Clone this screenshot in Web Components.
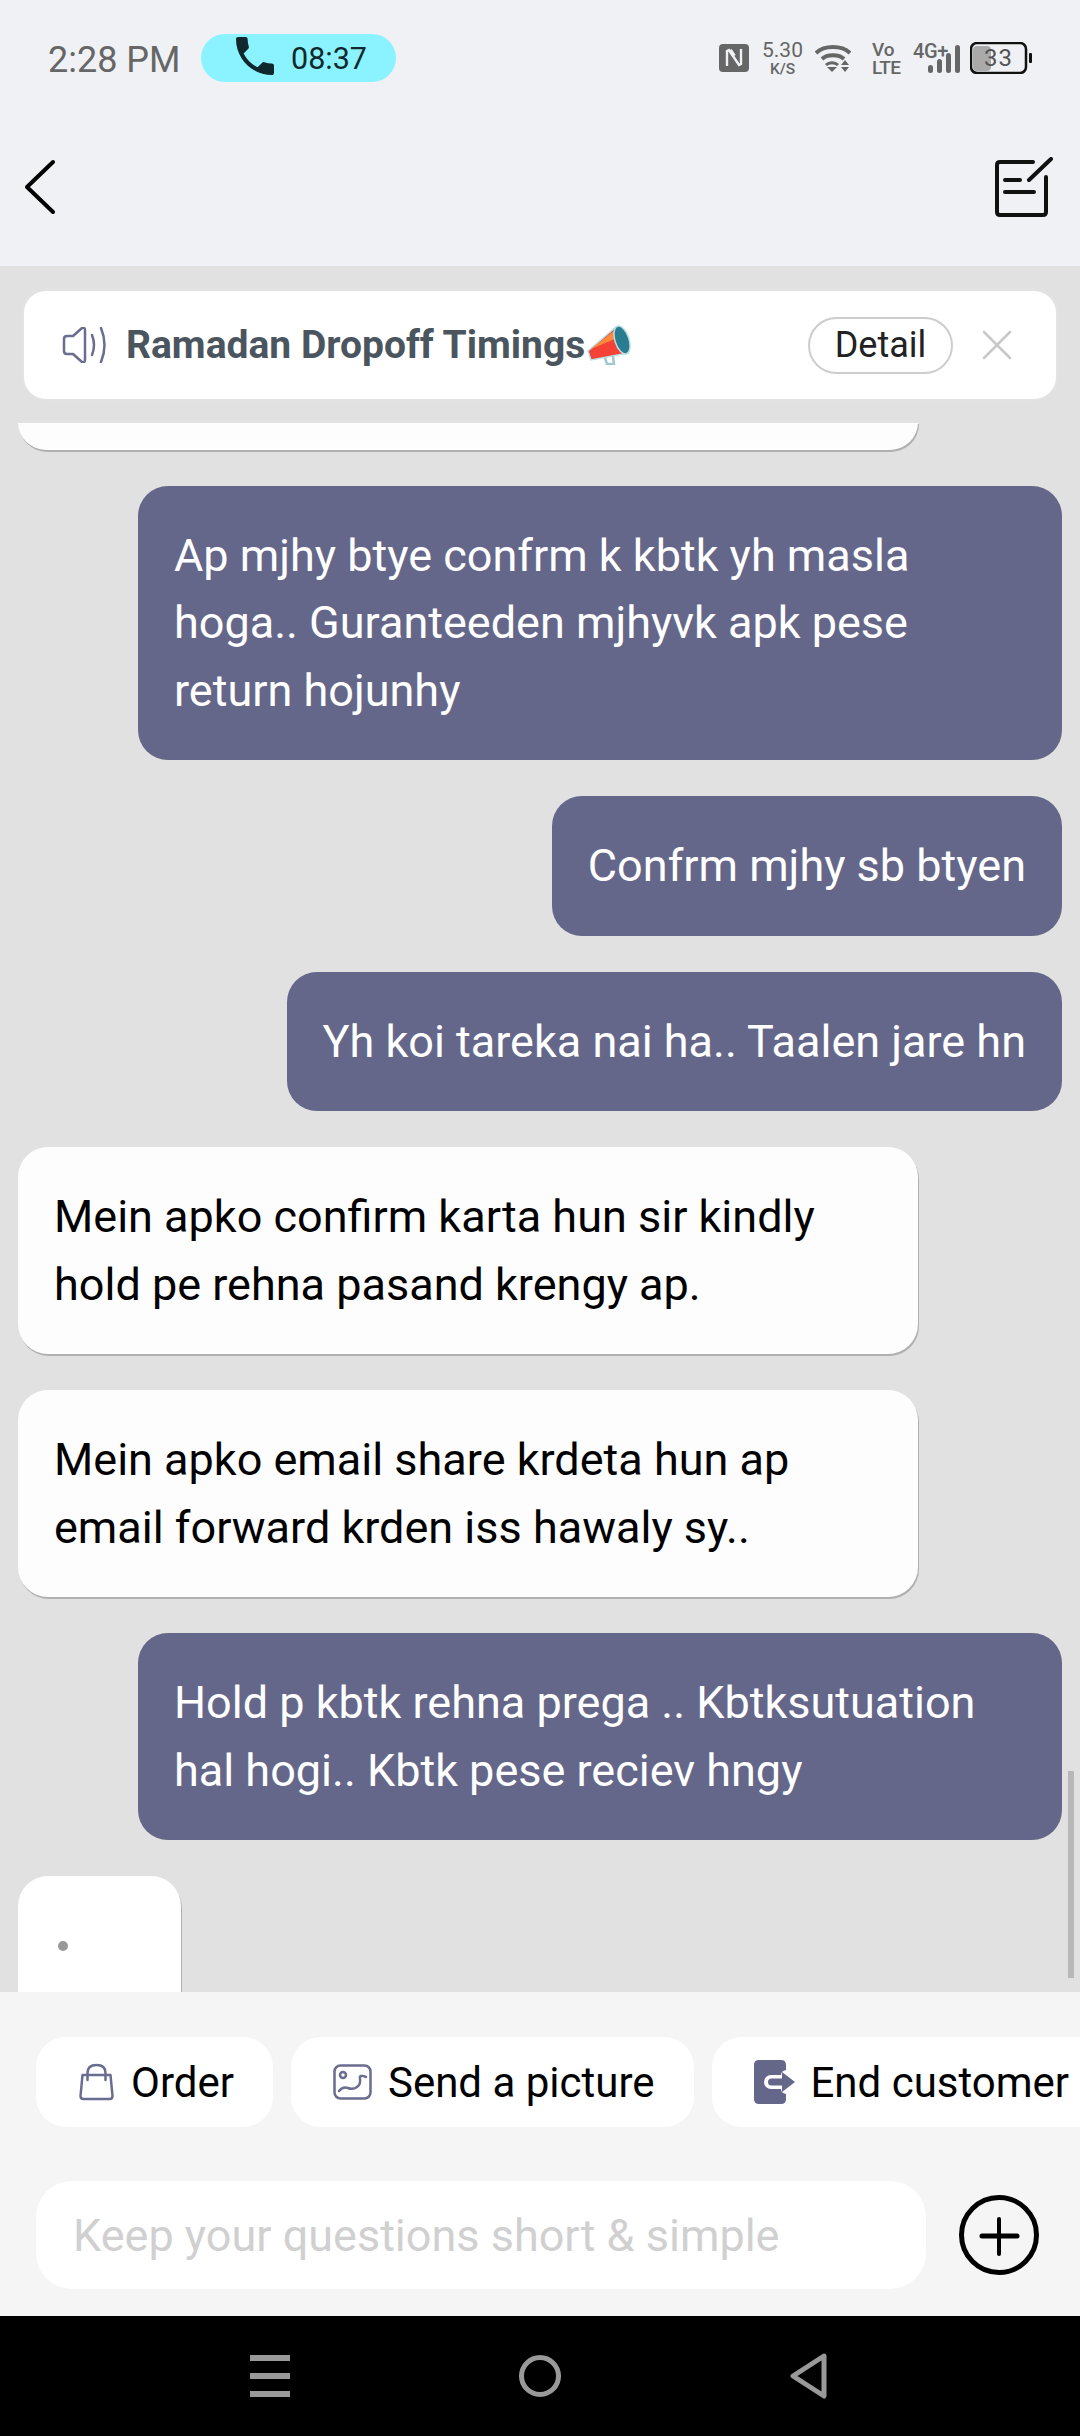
<!DOCTYPE html>
<html>
<head>
<meta charset="utf-8">
<title>Chat</title>
<style>
html, body { margin: 0; padding: 0; }
body { width: 1080px; height: 2436px; overflow: hidden; font-family: Roboto, "Liberation Sans", sans-serif; background: #e1e1e1; }
.app { display: flex; flex-direction: column; height: 2436px; }
</style>
</head>
<body>
<div class="app">
  <chat-header></chat-header>
  <notice-bar title="Ramadan Dropoff Timings"></notice-bar>
  <message-list>
    <chat-bubble tail></chat-bubble>
    <chat-bubble sent>Ap mjhy btye confrm k kbtk yh masla hoga.. Guranteeden mjhyvk apk pese return hojunhy</chat-bubble>
    <chat-bubble sent>Confrm mjhy sb btyen</chat-bubble>
    <chat-bubble sent>Yh koi tareka nai ha.. Taalen jare hn</chat-bubble>
    <chat-bubble>Mein apko confirm karta hun sir kindly hold pe rehna pasand krengy ap.</chat-bubble>
    <chat-bubble>Mein apko email share krdeta hun ap email forward krden iss hawaly sy..</chat-bubble>
    <chat-bubble sent>Hold p kbtk rehna prega .. Kbtksutuation hal hogi.. Kbtk pese reciev hngy</chat-bubble>
    <chat-bubble typing></chat-bubble>
  </message-list>
  <chat-footer></chat-footer>
  <nav-bar></nav-bar>
</div>

<script>
class ChatHeader extends HTMLElement {
    constructor() {
        super();
        this.attachShadow({mode: "open"}).innerHTML = `
        <style>
        :host { display: block; height: 266px; background: #eff1f5; color: #666; flex: none; }
        * { box-sizing: border-box; }
        .status { display: flex; align-items: center; height: 48px; margin-top: 34px; padding: 0 48px 0 48px; position: relative; top: 0; }
        .time { font-size: 36px; line-height: 48px; width: 153px; position: relative; top: 2px; }
        .pill { display: flex; align-items: center; width: 195px; height: 48px; border-radius: 24px; background: #8bf3ff; color: #10282c; font-size: 30.500px; padding-left: 35px; }
        .pill svg { width: 38px; height: 38px; margin-right: 17px; position: relative; top: -2px; }
        .right { margin-left: auto; display: flex; align-items: center; font-weight: 500; }
        .stack { display: flex; flex-direction: column; align-items: center; }
        .speed { margin-left: 14px; width: 39px; }
        .speed b { font-weight: 400; font-size: 21px; line-height: 21px; }
        .speed i { font-style: normal; font-size: 15.500px; line-height: 15px; font-weight: 500; margin-top: 1px; }
        .wifi { margin-left: 13px; }
        .volte { margin-left: 21px; width: 30px; align-items: flex-start; }
        .volte b { font-weight: 500; font-size: 19px; line-height: 18px; }
        .volte i { font-style: normal; font-weight: 500; font-size: 19px; line-height: 17px; letter-spacing: -.6px; }
        .net { margin-left: 11px; width: 47px; height: 32px; display: grid; position: relative; top: 0; }
        .net span { grid-area: 1 / 1; font-weight: 500; font-size: 20px; line-height: 18px; letter-spacing: -.4px; }
        .net svg { grid-area: 1 / 1; }
        .batt { margin-left: 10px; width: 62px; height: 32px; display: grid; }
        .batt svg { grid-area: 1 / 1; }
        .batt span { grid-area: 1 / 1; z-index: 1; font-weight: 400; font-size: 24px; line-height: 32px; padding-left: 14px; letter-spacing: 1px; color: #555; }
        .bar { display: flex; align-items: center; justify-content: space-between; height: 158px; margin-top: 26px; padding: 0 27px 0 22px; }
        .bar svg { display: block; }
        </style>
        <div class="status">
            <span class="time">2:28 PM</span>
            <div class="pill">
                <svg viewBox="3 3 18 18"><path fill="#10282c" d="M6.62 10.79c1.44 2.83 3.76 5.14 6.59 6.59l2.2-2.2c.27-.27.67-.36 1.02-.24 1.12.37 2.33.57 3.57.57.55 0 1 .45 1 1V20c0 .55-.45 1-1 1-9.39 0-17-7.61-17-17 0-.55.45-1 1-1h3.5c.55 0 1 .45 1 1 0 1.25.2 2.45.57 3.57.11.35.03.74-.25 1.02l-2.2 2.2z"/></svg>
                <span>08:37</span>
            </div>
            <div class="right">
                <svg width="30" height="28" viewBox="0 0 30 28"><rect width="30" height="28" rx="4" fill="#666"/><path d="M8 22V7l2-1 10 15 2-1V5" fill="none" stroke="#eff1f5" stroke-width="2.400"/><path d="M11 6l4 6" stroke="#eff1f5" stroke-width="4"/></svg>
                <div class="stack speed"><b>5.30</b><i>K/S</i></div>
                <svg class="wifi" width="36" height="30" viewBox="0 0 36 30" fill="none" stroke="#666"><path d="M1 10C9 2 27 2 35 10" stroke-width="4"/><path d="M7 16C12 11 24 11 29 16" stroke-width="4"/><path d="M11 22C14 19 20 19 23 22" stroke-width="3"/><path d="M12 24h10l-5 5z" fill="#666" stroke="none"/><path d="M30 17l4 5h-8zM26 24h8l-4 5z" fill="#666" stroke="none"/></svg>
                <div class="stack volte"><b>Vo</b><i>LTE</i></div>
                <div class="net">
                    <span>4G+</span>
                    <svg width="47" height="32" viewBox="0 0 47 32" fill="#666"><rect x="15" y="23" width="5" height="8" rx="2.500"/><rect x="24" y="17" width="5" height="14" rx="2.500"/><rect x="33" y="11" width="5" height="20" rx="2.500"/><rect x="42" y="3" width="5" height="28" rx="2.500"/></svg>
                </div>
                <div class="batt">
                    <svg width="62" height="32" viewBox="0 0 62 32"><rect x="3" y="4" width="18" height="25" rx="4" fill="#aaa"/><rect x="1" y="1" width="55" height="30" rx="6" fill="none" stroke="#111" stroke-width="2.500"/><rect x="59" y="11" width="3" height="10" rx="1" fill="#111"/></svg>
                    <span>33</span>
                </div>
            </div>
        </div>
        <div class="bar">
            <svg width="36" height="56" viewBox="0 0 36 56" fill="none" stroke="#000" stroke-width="4" stroke-linecap="round" stroke-linejoin="round"><path d="M31 3L5 28l26 25"/></svg>
            <svg width="58" height="60" viewBox="0 0 58 60" fill="none" stroke="#111" stroke-width="4" stroke-linecap="round" stroke-linejoin="round"><path d="M38 5H5Q2 5 2 8v47q0 3 3 3h43q3 0 3-3V20"/><path d="M34 23L56 2" /><path d="M10 23h15M10 35h29"/></svg>
        </div>`;
    }
}

class NoticeBar extends HTMLElement {
    constructor() {
        super();
        this.attachShadow({mode: "open"});
    }
    connectedCallback() {
        this.shadowRoot.innerHTML = `
        <style>
        :host { display: block; flex: none; padding: 25px 24px 24px; background: #e1e1e1; }
        .card { display: flex; align-items: center; height: 108px; background: #fff; border-radius: 22px; padding: 0 44px 0 38px; box-shadow: 0 0 3px #e8e8e8; }
        .title { font-size: 39px; font-weight: 700; color: #4a5560; margin-left: 19px; white-space: nowrap; }
        .horn { margin-left: 2px; flex: none; }
        .detail { margin-left: auto; width: 145px; height: 57px; box-sizing: border-box; border: 2px solid #cdcdcd; border-radius: 29px; font-size: 36px; color: #222; display: flex; align-items: center; justify-content: center; }
        .close { margin-left: 29px; flex: none; }
        </style>
        <div class="card">
            <svg width="45" height="36" viewBox="0 0 45 36" fill="none" stroke="#6a6c90" stroke-width="2.500" stroke-linecap="round" stroke-linejoin="round"><path d="M5 9h6l9-8q3-1 3 2v30q0 3-3 2l-9-8H5q-3 0-3-3V12q0-3 3-3z"/><path d="M30 8q4 10 0 20"/><path d="M39 1q7 17 0 34"/></svg>
            <span class="title">${this.getAttribute("title")}</span>
            <svg class="horn" width="46" height="40" viewBox="0 0 46 40"><path d="M1 26L29 2l12 26-37 7z" fill="#f44336" stroke="#b8dde2" stroke-width="1.500"/><path d="M4 24L27 6l3 7z" fill="#ff8a3c"/><path d="M18 33l2 6h7l-1-8" fill="none" stroke="#9fc9cf" stroke-width="2.500"/><ellipse cx="35" cy="15" rx="7" ry="14.500" transform="rotate(-18 35 15)" fill="#2a7d90" stroke="#b8dde2" stroke-width="1.500"/></svg>
            <div class="detail">Detail</div>
            <svg class="close" width="30" height="30" viewBox="0 0 30 30" stroke="#c8c8c8" stroke-width="2.500" stroke-linecap="round"><path d="M2 2l26 26M28 2L2 28"/></svg>
        </div>`;
    }
}

class MessageList extends HTMLElement {
    constructor() {
        super();
        this.attachShadow({mode: "open"}).innerHTML = `
        <style>
        :host { display: flex; flex: 1; min-height: 0; position: relative; overflow: hidden; background: #e1e1e1; }
        .scroll { flex: 1; display: flex; flex-direction: column; justify-content: flex-end; gap: 36px; padding: 0 18px; min-width: 0; }
        .thumb { position: absolute; right: 6px; bottom: 14px; width: 6px; height: 207px; background: #b8b8b8; }
        </style>
        <div class="scroll"><slot></slot></div>
        <div class="thumb"></div>`;
    }
}

class ChatBubble extends HTMLElement {
    constructor() {
        super();
        this.attachShadow({mode: "open"}).innerHTML = `
        <style>
        :host { display: block; flex: none; box-sizing: border-box; width: 900px; padding: 36px; border-radius: 30px; background: #fdfdfd; color: #000; font-size: 45px; line-height: 67.500px; box-shadow: 1px 2px 0 #b0b0b0; }
        :host([sent]) { align-self: flex-end; width: fit-content; max-width: 924px; background: #65678a; color: #fff; box-shadow: none; }
        :host([tail]) { height: 28px; padding: 0; border-radius: 0 0 30px 30px; background: #fdfdfd; }
        :host([typing]) { width: 163px; height: 116px; padding: 0; border-radius: 30px 30px 0 0; background: #fff; }
        .dot { display: none; width: 10px; height: 10px; border-radius: 50%; background: #999; margin: 65px 0 0 40px; }
        :host([typing]) .dot { display: block; }
        </style>
        <div class="dot"></div><slot></slot>`;
    }
}

class QuickChip extends HTMLElement {
    constructor() {
        super();
        this.attachShadow({mode: "open"}).innerHTML = `
        <style>
        :host { display: flex; flex: none; align-items: center; height: 90px; background: #fff; border-radius: 30px; padding: 0 39px 0 42px; font-size: 42px; color: #000; white-space: nowrap; gap: 16px; }
        ::slotted(svg) { display: block; flex: none; }
        </style>
        <slot name="icon"></slot><slot></slot>`;
    }
}

class ChatFooter extends HTMLElement {
    constructor() {
        super();
        this.attachShadow({mode: "open"}).innerHTML = `
        <style>
        :host { display: block; flex: none; height: 324px; background: #f5f5f5; overflow: hidden; }
        .chips { display: flex; gap: 18px; padding: 45px 0 0 36px; width: 1400px; }
        .input { display: flex; align-items: center; gap: 33px; padding: 54px 41px 0 36px; }
        .box { flex: 1; height: 108px; border-radius: 36px; background: #fff; display: flex; align-items: center; padding-left: 37px; font-size: 45px; color: #d0d0d0; }
        svg { display: block; flex: none; }
        </style>
        <div class="chips">
            <quick-chip>
                <svg slot="icon" width="37" height="38" viewBox="0 0 36 38" fill="none" stroke="#6a6c90" stroke-width="2.500" stroke-linecap="round" stroke-linejoin="round"><path d="M4 12h28l2 21q0 3-3 3H5q-3 0-3-3z"/><path d="M9 17v-7q0-8 9-8t9 8v7"/></svg>
                Order
            </quick-chip>
            <quick-chip>
                <svg slot="icon" width="39" height="36" viewBox="0 0 39 36" fill="none" stroke="#6a6c90" stroke-width="2.500" stroke-linecap="round" stroke-linejoin="round"><rect x="1.500" y="1.500" width="36" height="33" rx="6"/><circle cx="10" cy="11" r="3"/><path d="M6 27q4-5 9-3t9-1 3-8 6-2"/></svg>
                Send a picture
            </quick-chip>
            <quick-chip>
                <svg slot="icon" width="41" height="44" viewBox="0 0 41 44"><path d="M5 0h22q5 0 5 5v5q-5 1-5 5H17a7 7 0 0 0 0 14h10q0 4 5 5v5q0 5-5 5H5q-5 0-5-5V5q0-5 5-5z" fill="#65678a"/><path d="M14 22a3.500 3.500 0 0 1 3.500-3.500H28V12l13 10-13 10v-6.500H17.500A3.500 3.500 0 0 1 14 22z" fill="#65678a"/></svg>
                End customer service
            </quick-chip>
        </div>
        <div class="input">
            <div class="box">Keep your questions short &amp; simple</div>
            <svg width="80" height="80" viewBox="0 0 80 80" fill="none" stroke="#000" stroke-linecap="round"><circle cx="40" cy="40" r="37.500" stroke-width="5"/><path d="M23 41h35" stroke-width="5"/><path d="M40 24v35" stroke-width="4"/></svg>
        </div>`;
    }
}

class NavBar extends HTMLElement {
    constructor() {
        super();
        this.attachShadow({mode: "open"}).innerHTML = `
        <style>
        :host { display: flex; flex: none; height: 120px; background: #000; align-items: center; padding: 0 0 0 250px; box-sizing: border-box; }
        svg { display: block; flex: none; }
        </style>
        <svg width="40" height="42" viewBox="0 0 40 42" fill="#999"><rect width="40" height="6"/><rect y="18" width="40" height="6"/><rect y="36" width="40" height="6"/></svg>
        <svg style="margin-left:229px" width="42" height="42" viewBox="0 0 42 42" fill="none" stroke="#999" stroke-width="5"><circle cx="21" cy="21" r="18.500"/></svg>
        <svg style="margin-left:229px" width="37" height="46" viewBox="0 0 37 46" fill="none" stroke="#999" stroke-width="5" stroke-linejoin="round"><path d="M34 3L3 23l31 20z"/></svg>`;
    }
}

customElements.define("chat-header", ChatHeader);
customElements.define("notice-bar", NoticeBar);
customElements.define("message-list", MessageList);
customElements.define("chat-bubble", ChatBubble);
customElements.define("quick-chip", QuickChip);
customElements.define("chat-footer", ChatFooter);
customElements.define("nav-bar", NavBar);
</script>
</body>
</html>
